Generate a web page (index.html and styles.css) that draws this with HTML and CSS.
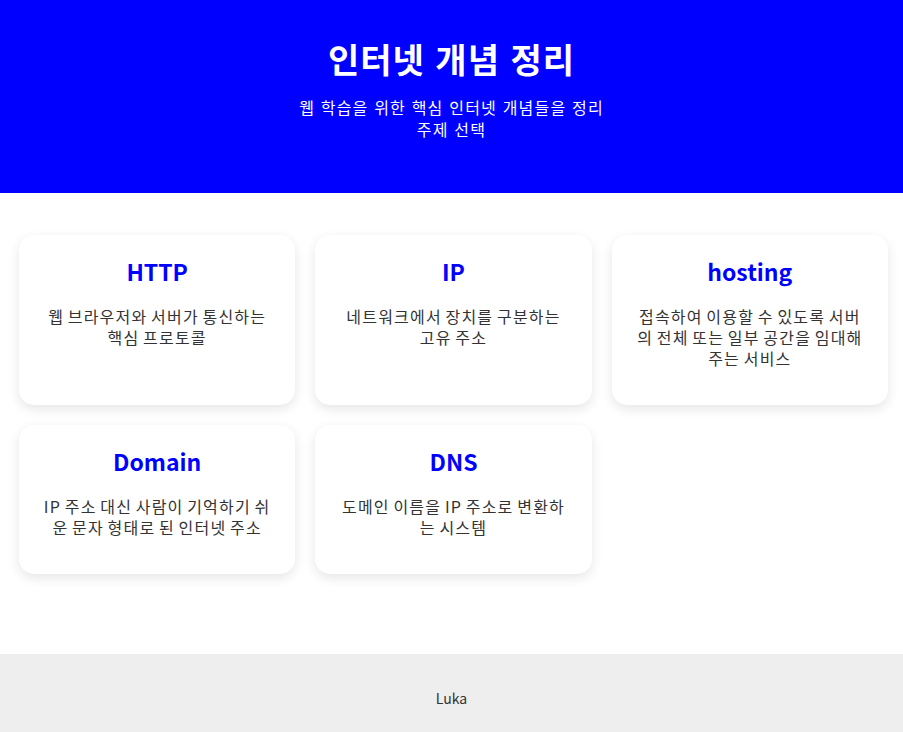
FILE: index.html
```html
<!DOCTYPE html>
<html lang="ko">
<head>
<meta charset="utf-8">
<title>인터넷 개념 정리</title>
<link rel="stylesheet" href="styles.css">
</head>
<body>
<header class="site-header">
  <h1 class="site-title">인터넷 개념 정리</h1>
  <p class="site-sub">웹 학습을 위한 핵심 인터넷 개념들을 정리<br>주제 선택</p>
</header>
<main class="cards">
  <article class="card">
    <h2 class="card-title">HTTP</h2>
    <p class="card-desc">웹 브라우저와 서버가 통신하는 핵심 프로토콜</p>
  </article>
  <article class="card">
    <h2 class="card-title">IP</h2>
    <p class="card-desc">네트워크에서 장치를 구분하는 고유 주소</p>
  </article>
  <article class="card">
    <h2 class="card-title">hosting</h2>
    <p class="card-desc">접속하여 이용할 수 있도록 서버의 전체 또는 일부 공간을 임대해 주는 서비스</p>
  </article>
  <article class="card">
    <h2 class="card-title">Domain</h2>
    <p class="card-desc">IP 주소 대신 사람이 기억하기 쉬운 문자 형태로 된 인터넷 주소</p>
  </article>
  <article class="card">
    <h2 class="card-title">DNS</h2>
    <p class="card-desc">도메인 이름을 IP 주소로 변환하는 시스템</p>
  </article>
</main>
<footer class="site-footer">
  <p class="footer-text">Luka</p>
</footer>
</body>
</html>
```
FILE: styles.css
```css
* { box-sizing: border-box; }
body {
  margin: 0;
  font-family: "Noto Sans CJK KR", "Noto Sans", sans-serif;
  color: #333;
  background: #fff;
}
.site-header {
  background: #0000ff;
  color: #fff;
  text-align: center;
  padding: 38px 20px 53px;
}
.site-title {
  margin: 0;
  font-size: 34px;
  line-height: 41px;
  font-weight: 700;
  letter-spacing: 1px;
}
.site-sub {
  margin: 17px 0 0;
  font-size: 16px;
  line-height: 22px;
  letter-spacing: 1.2px;
}
.cards {
  display: grid;
  grid-template-columns: repeat(3, 1fr);
  gap: 20px;
  padding: 42px 15px 80px 19px;
}
.card {
  background: #fff;
  border-radius: 15px;
  box-shadow: 0 4px 12px rgba(0, 0, 0, 0.1);
  padding: 21px 23px 36px;
  text-align: center;
}
.card-title {
  margin: 0 0 20px;
  color: #0000ff;
  font-size: 23px;
  line-height: 30px;
  font-weight: 700;
}
.card-desc {
  margin: 0;
  font-size: 16px;
  line-height: 21px;
  color: #333;
  letter-spacing: 1.2px;
  word-spacing: -2px;
}
.site-footer {
  background: #eeeeee;
  text-align: center;
  padding: 34px 20px;
}
.footer-text {
  margin: 0;
  font-size: 14px;
  line-height: 20px;
  color: #333;
}
```
